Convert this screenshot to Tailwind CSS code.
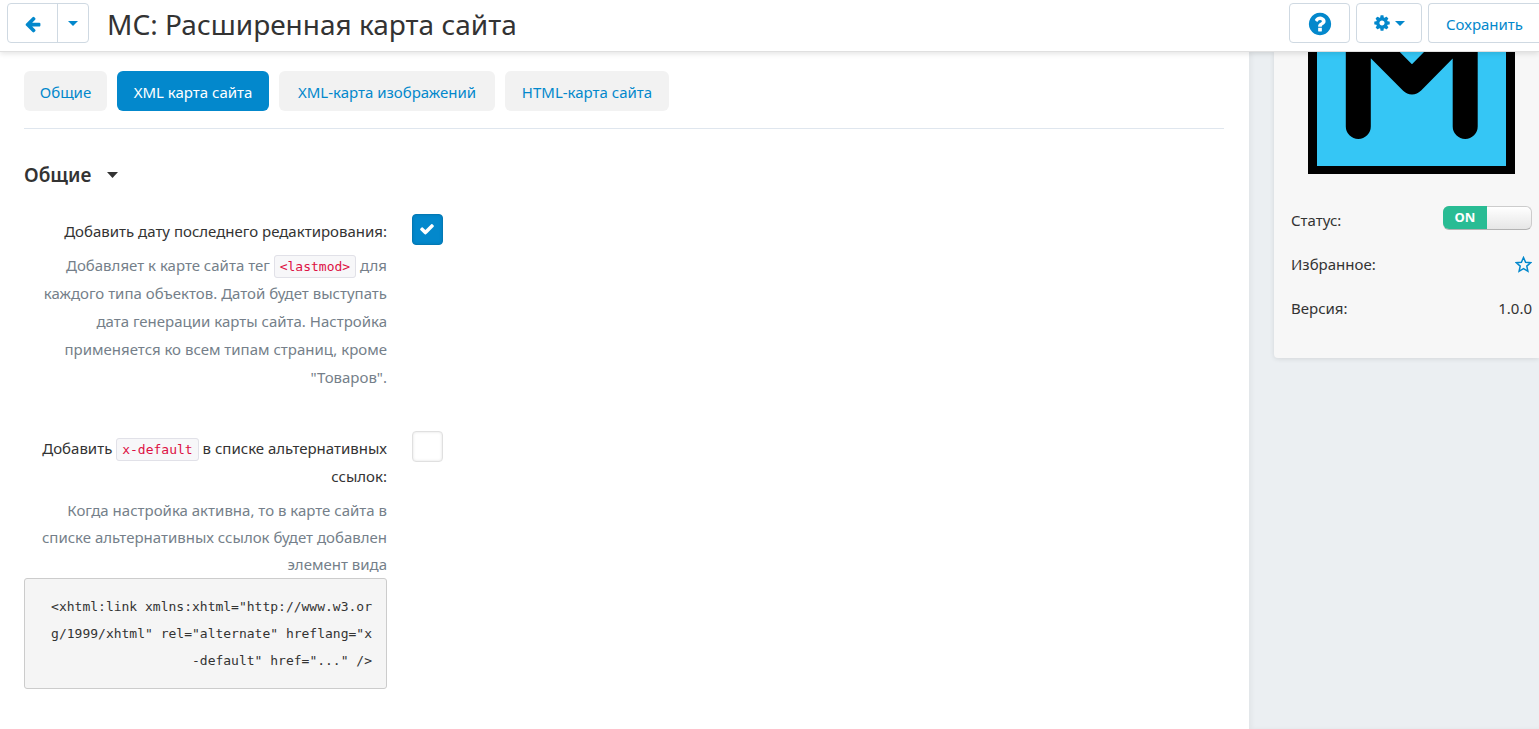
<!DOCTYPE html>
<html lang="ru">
<head>
  <meta charset="UTF-8">
  <meta name="viewport" content="width=device-width, initial-scale=1.0">
  <title>МС: Расширенная карта сайта</title>
  <script src="https://cdn.jsdelivr.net/npm/@tailwindcss/browser@4"></script>
</head>
<body class="min-h-screen flex flex-col overflow-x-hidden bg-[#ebeff2] font-['Noto_Sans',sans-serif] text-[15px] text-[#333]">
  <!-- Top bar -->
  <header class="relative z-10 flex items-start h-[52px] pt-[3px] pl-[7px] bg-white border-b border-[#e0e0e0] shadow-[0_2px_5px_rgba(0,0,0,0.1)]">
    <div class="flex h-10 rounded border border-[#cfd9e2] text-[#0388cc]">
      <a href="#" aria-label="Назад" class="flex items-center justify-center w-[50px] pt-px pl-[2px] border-r border-[#cfd9e2]">
        <svg class="size-[18px]" viewBox="0 0 1792 1792" fill="currentColor"><path d="M1536 896v128q0 53-32.5 90.5t-84.5 37.5h-704l293 294q38 36 38 90t-38 90l-75 76q-37 37-90 37-52 0-91-37l-651-652q-37-37-37-90 0-52 37-91l651-650q38-38 91-38 52 0 90 38l75 74q38 38 38 91t-38 91l-293 293h704q52 0 84.5 37.5t32.5 90.5z"/></svg>
      </a>
      <button type="button" aria-label="История" class="flex items-center justify-center w-[30px]">
        <svg class="w-[10px] h-[5px]" viewBox="0 0 10 5" fill="currentColor"><path d="M0 0h10L5 5z"/></svg>
      </button>
    </div>
    <h1 class="ml-[18px] text-[28px] leading-[42px] whitespace-nowrap">МС: Расширенная карта сайта</h1>
    <div class="ml-auto flex gap-[6px] text-[#0388cc]">
      <button type="button" aria-label="Помощь" class="flex items-center justify-center w-[61px] h-10 pt-px rounded border border-[#cfd9e2]">
        <svg class="size-[26px]" viewBox="0 0 1792 1792" fill="currentColor"><path d="M1024 1376v-192q0-14-9-23t-23-9h-192q-14 0-23 9t-9 23v192q0 14 9 23t23 9h192q14 0 23-9t9-23zm256-672q0-88-55.5-163t-138.5-116-170-41q-243 0-371 213-15 24 8 42l132 100q7 6 19 6 16 0 25-12 53-68 86-92 34-24 86-24 48 0 85.5 26t37.5 59q0 38-20 61t-68 45q-63 28-115.5 86.5t-52.5 125.5v36q0 14 9 23t23 9h192q14 0 23-9t9-23q0-19 21.5-49.5t54.5-49.5q32-18 49-28.5t46-35 44.5-48 28-60.5 12.5-81zm384 192q0 209-103 385.5t-279.5 279.5-385.5 103-385.5-103-279.5-279.5-103-385.5 103-385.5 279.5-279.5 385.5-103 385.5 103 279.5 279.5 103 385.5z"/></svg>
      </button>
      <button type="button" aria-label="Настройки" class="flex items-center justify-center gap-1 w-[66px] h-10 rounded border border-[#cfd9e2]">
        <svg class="size-[18px]" viewBox="0 0 1792 1792" fill="currentColor"><path d="M1152 896q0-106-75-181t-181-75-181 75-75 181 75 181 181 75 181-75 75-181zm512-109v222q0 12-8 23t-20 13l-185 28q-19 54-39 91 35 50 107 138 10 12 10 25t-9 23q-27 37-99 108t-94 71q-12 0-26-9l-138-108q-44 23-91 38-16 136-29 186-7 28-36 28h-222q-14 0-24.5-8.5t-11.5-21.5l-28-184q-49-16-90-37l-141 107q-10 9-25 9-14 0-25-11-126-114-165-168-7-10-7-23 0-12 8-23 15-21 51-66.5t54-70.5q-27-50-41-99l-183-27q-13-2-21-12.5t-8-23.5v-222q0-12 8-23t19-13l186-28q14-46 39-92-40-57-107-138-10-12-10-24 0-10 9-23 26-36 98.5-107.5t94.5-71.5q13 0 26 10l138 107q44-23 91-38 16-136 29-186 7-28 36-28h222q14 0 24.5 8.5t11.5 21.5l28 184q49 16 90 37l142-107q9-9 24-9 13 0 25 10 129 119 165 170 7 8 7 22 0 12-8 23-15 21-51 66.5t-54 70.5q26 50 41 98l183 28q13 2 21 12.5t8 23.5z"/></svg>
        <svg class="w-[10px] h-[5px]" viewBox="0 0 10 5" fill="currentColor"><path d="M0 0h10L5 5z"/></svg>
      </button>
      <button type="button" class="h-10 w-[111px] pt-[2px] pl-[17px] text-left whitespace-nowrap rounded-l border border-r-0 border-[#cfd9e2]">Сохранить</button>
    </div>
  </header>

  <div class="flex flex-1">
    <main class="flex-1 bg-white pt-[19px] pl-6 pr-[25px]">
      <nav class="flex gap-[10px] pb-[17px] border-b border-[#dfe6ee] text-center text-[#0388cc]">
        <a href="#" class="h-10 leading-[42px] min-w-[83px] px-[15px] rounded-md bg-[#f2f2f2]">Общие</a>
        <a href="#" class="h-10 leading-[42px] min-w-[152px] px-[15px] rounded-md bg-[#0388cc] text-white">XML карта сайта</a>
        <a href="#" class="h-10 leading-[42px] min-w-[216px] px-[15px] rounded-md bg-[#f2f2f2]">XML-карта изображений</a>
        <a href="#" class="h-10 leading-[42px] min-w-[164px] px-[15px] rounded-md bg-[#f2f2f2]">HTML-карта сайта</a>
      </nav>

      <h2 class="mt-8 text-[19px] leading-7 font-semibold">
        <button type="button" class="flex items-center gap-4">Общие
          <svg class="w-[11px] h-[6px]" viewBox="0 0 11 6" fill="currentColor"><path d="M0 0h11L5.500 6z"/></svg>
        </button>
      </h2>

      <form>
        <div class="flex gap-[25px] mt-7">
          <div class="w-[363px] text-right leading-7">
            <label for="lastmod">Добавить дату последнего редактирования:</label>
            <p class="mt-[6px] text-[#757f8a]">Добавляет к карте сайта тег <code class="px-[5px] py-[3px] rounded-[3px] border border-[#e1e1e8] bg-[#f7f7f9] font-['DejaVu_Sans_Mono',monospace] text-[13px] leading-none text-[#dd1144]">&lt;lastmod&gt;</code> для каждого типа объектов. Датой будет выступать дата генерации карты сайта. Настройка применяется ко всем типам страниц, кроме "Товаров".</p>
          </div>
          <div class="relative size-[31px] -mt-[3px]">
            <input id="lastmod" type="checkbox" checked class="peer appearance-none block size-[31px] rounded border border-[#e0e0e0] shadow-[inset_0_0_3px_rgba(0,0,0,0.12)] checked:bg-[#0388cc] checked:border-[#0379b5]">
            <svg class="absolute top-[7px] left-[7px] size-4 text-white pointer-events-none hidden peer-checked:block" viewBox="0 0 1792 1792" fill="currentColor"><path d="M1671 566q0 40-28 68l-724 724-136 136q-28 28-68 28t-68-28l-136-136-362-362q-28-28-28-68t28-68l136-136q28-28 68-28t68 28l294 295 656-657q28-28 68-28t68 28l136 136q28 28 28 68z"/></svg>
          </div>
        </div>

        <div class="flex gap-[25px] mt-[43px]">
          <div class="w-[363px] text-right leading-7">
            <label for="xdefault">Добавить <code class="px-[5px] py-[3px] rounded-[3px] border border-[#e1e1e8] bg-[#f7f7f9] font-['DejaVu_Sans_Mono',monospace] text-[13px] leading-none text-[#dd1144]">x-default</code> в списке альтернативных ссылок:</label>
            <p class="mt-[7px] leading-[27px] text-[#757f8a]">Когда настройка активна, то в карте сайта в списке альтернативных ссылок будет добавлен элемент вида</p>
            <pre class="py-[14px] pl-[19px] pr-[14px] rounded-[3px] border border-[#ccc] bg-[#f5f5f5] font-['DejaVu_Sans_Mono',monospace] text-[13px] leading-[27px] whitespace-pre-wrap break-all">&lt;xhtml:link xmlns:xhtml="http://www.w3.org/1999/xhtml" rel="alternate" hreflang="x-default" href="..." /&gt;</pre>
          </div>
          <div class="relative size-[31px] -mt-[3px]">
            <input id="xdefault" type="checkbox" class="peer appearance-none block size-[31px] rounded border border-[#e0e0e0] shadow-[inset_0_0_3px_rgba(0,0,0,0.12)] checked:bg-[#0388cc] checked:border-[#0379b5]">
            <svg class="absolute top-[7px] left-[7px] size-4 text-white pointer-events-none hidden peer-checked:block" viewBox="0 0 1792 1792" fill="currentColor"><path d="M1671 566q0 40-28 68l-724 724-136 136q-28 28-68 28t-68-28l-136-136-362-362q-28-28-28-68t28-68l136-136q28-28 68-28t68 28l294 295 656-657q28-28 68-28t68 28l136 136q28 28 28 68z"/></svg>
          </div>
        </div>
      </form>
    </main>

    <!-- Add-on summary -->
    <aside class="w-[290px] pl-[25px] shadow-[inset_3px_0_4px_rgba(0,0,0,0.04)]">
      <div class="pl-[17px] pr-[7px] pb-[38px] rounded-bl bg-[#f7f7f7] shadow-[0_1px_5px_rgba(0,0,0,0.1)]">
        <svg class="mx-auto w-[207px] h-[122px]" viewBox="0 0 207 122" role="img" aria-label="М">
          <rect x="0" y="-85" width="207" height="207" fill="#000"/>
          <rect x="9" y="-76" width="189" height="190" fill="#35c6f5"/>
          <path d="M50.300 74.500V-24L104 30l53.200-54v98.500" fill="none" stroke="#000" stroke-width="25" stroke-linecap="round" stroke-linejoin="round"/>
        </svg>
        <dl class="mt-[35px] leading-[23px] flex flex-col gap-[21px]">
          <div class="flex justify-between">
            <dt><label for="status">Статус:</label></dt>
            <dd class="relative w-[89px] h-[23px] -mt-[3px]">
              <input id="status" type="checkbox" role="switch" checked class="appearance-none block w-full h-6 rounded-md border border-[#ccc] border-b-[#b3b3b3] bg-linear-to-b from-white to-[#e6e6e6]">
              <span class="absolute top-0 left-0 w-[44px] rounded-l-md bg-[#29bc94] text-center text-white text-[13px] leading-[23px] font-bold pointer-events-none">ON</span>
            </dd>
          </div>
          <div class="flex justify-between">
            <dt>Избранное:</dt>
            <dd class="flex items-center">
              <button type="button" aria-label="В избранное" class="text-[#0388cc]">
                <svg class="size-[17px]" viewBox="0 0 17 17" fill="none" stroke="currentColor" stroke-width="1.500"><path d="M8.500 1.500l2.100 4.700 5 .5-3.800 3.400 1.100 5.200-4.400-2.700-4.400 2.700 1.100-5.200L1.400 6.700l5-.5z"/></svg>
              </button>
            </dd>
          </div>
          <div class="flex justify-between">
            <dt>Версия:</dt>
            <dd>1.0.0</dd>
          </div>
        </dl>
      </div>
    </aside>
  </div>
</body>
</html>
